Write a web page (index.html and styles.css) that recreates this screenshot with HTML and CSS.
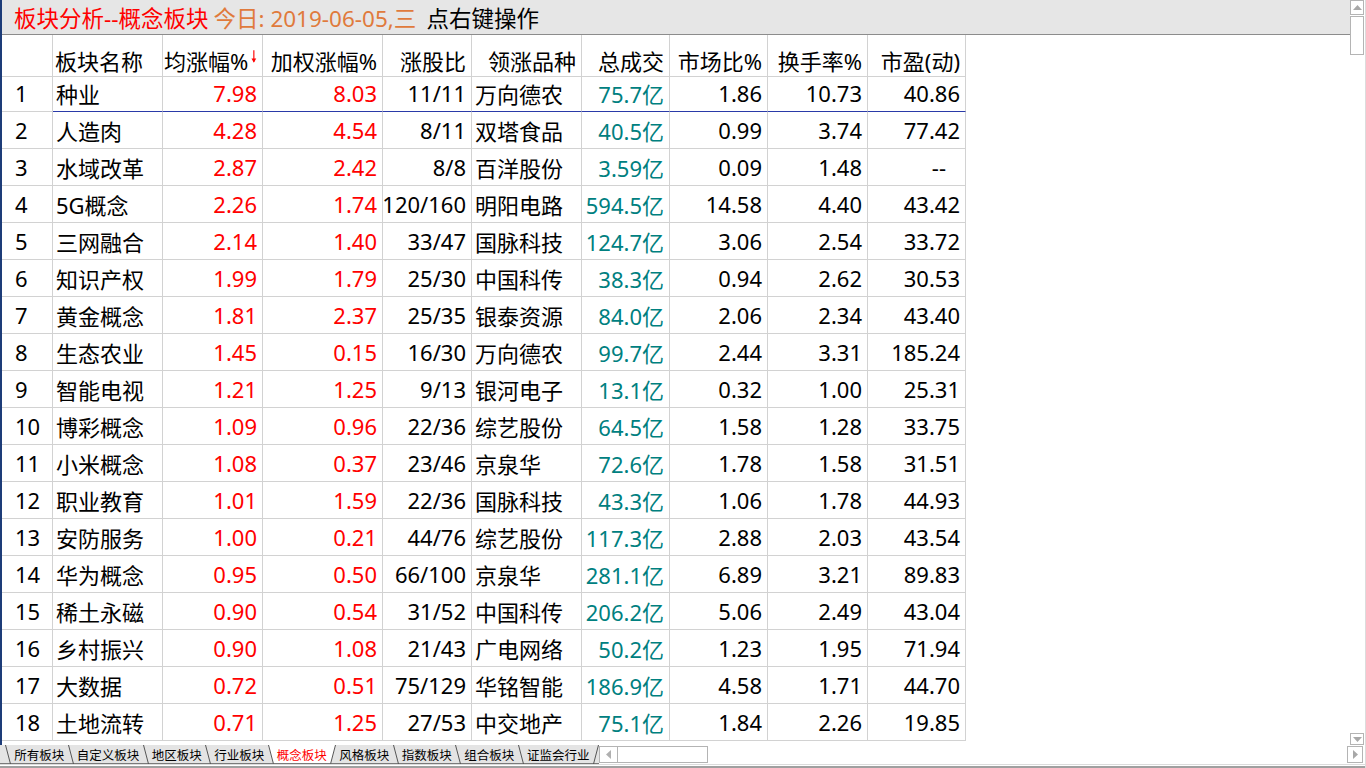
FILE: index.html
```html
<!DOCTYPE html>
<html lang="zh-CN">
<head>
<meta charset="utf-8">
<title>板块分析--概念板块</title>
<link rel="stylesheet" href="styles.css">
</head>
<body>
<div class="window">
  <div class="main">
    <div class="content">
      <div class="titlebar">
        <span class="t-red">板块分析--概念板块</span>
        <span class="t-orange">今日: 2019-06-05,三</span>
        <span class="t-black">点右键操作</span>
      </div>
      <div class="grid">
        <div class="row head">
          <div class="c idx"></div>
          <div class="c left">板块名称</div>
          <div class="c sort">均涨幅%<svg class="arrow" width="6" height="14" viewBox="0 0 6 14"><path d="M3 0V12" stroke="#f00" stroke-width="1.2" fill="none"/><path d="M0.5 8.5L3 13L5.5 8.5Z" fill="#f00"/></svg></div>
          <div class="c">加权涨幅%</div>
          <div class="c">涨股比</div>
          <div class="c">领涨品种</div>
          <div class="c">总成交</div>
          <div class="c">市场比%</div>
          <div class="c">换手率%</div>
          <div class="c">市盈(动)</div>
        </div>
        <div class="row sel"><div class="c idx">1</div><div class="c left">种业</div><div class="c red">7.98</div><div class="c red">8.03</div><div class="c">11/11</div><div class="c left">万向德农</div><div class="c teal">75.7亿</div><div class="c">1.86</div><div class="c">10.73</div><div class="c">40.86</div></div>
        <div class="row"><div class="c idx">2</div><div class="c left">人造肉</div><div class="c red">4.28</div><div class="c red">4.54</div><div class="c">8/11</div><div class="c left">双塔食品</div><div class="c teal">40.5亿</div><div class="c">0.99</div><div class="c">3.74</div><div class="c">77.42</div></div>
        <div class="row"><div class="c idx">3</div><div class="c left">水域改革</div><div class="c red">2.87</div><div class="c red">2.42</div><div class="c">8/8</div><div class="c left">百洋股份</div><div class="c teal">3.59亿</div><div class="c">0.09</div><div class="c">1.48</div><div class="c dash">--</div></div>
        <div class="row"><div class="c idx">4</div><div class="c left">5G概念</div><div class="c red">2.26</div><div class="c red">1.74</div><div class="c">120/160</div><div class="c left">明阳电路</div><div class="c teal">594.5亿</div><div class="c">14.58</div><div class="c">4.40</div><div class="c">43.42</div></div>
        <div class="row"><div class="c idx">5</div><div class="c left">三网融合</div><div class="c red">2.14</div><div class="c red">1.40</div><div class="c">33/47</div><div class="c left">国脉科技</div><div class="c teal">124.7亿</div><div class="c">3.06</div><div class="c">2.54</div><div class="c">33.72</div></div>
        <div class="row"><div class="c idx">6</div><div class="c left">知识产权</div><div class="c red">1.99</div><div class="c red">1.79</div><div class="c">25/30</div><div class="c left">中国科传</div><div class="c teal">38.3亿</div><div class="c">0.94</div><div class="c">2.62</div><div class="c">30.53</div></div>
        <div class="row"><div class="c idx">7</div><div class="c left">黄金概念</div><div class="c red">1.81</div><div class="c red">2.37</div><div class="c">25/35</div><div class="c left">银泰资源</div><div class="c teal">84.0亿</div><div class="c">2.06</div><div class="c">2.34</div><div class="c">43.40</div></div>
        <div class="row"><div class="c idx">8</div><div class="c left">生态农业</div><div class="c red">1.45</div><div class="c red">0.15</div><div class="c">16/30</div><div class="c left">万向德农</div><div class="c teal">99.7亿</div><div class="c">2.44</div><div class="c">3.31</div><div class="c">185.24</div></div>
        <div class="row"><div class="c idx">9</div><div class="c left">智能电视</div><div class="c red">1.21</div><div class="c red">1.25</div><div class="c">9/13</div><div class="c left">银河电子</div><div class="c teal">13.1亿</div><div class="c">0.32</div><div class="c">1.00</div><div class="c">25.31</div></div>
        <div class="row"><div class="c idx">10</div><div class="c left">博彩概念</div><div class="c red">1.09</div><div class="c red">0.96</div><div class="c">22/36</div><div class="c left">综艺股份</div><div class="c teal">64.5亿</div><div class="c">1.58</div><div class="c">1.28</div><div class="c">33.75</div></div>
        <div class="row"><div class="c idx">11</div><div class="c left">小米概念</div><div class="c red">1.08</div><div class="c red">0.37</div><div class="c">23/46</div><div class="c left">京泉华</div><div class="c teal">72.6亿</div><div class="c">1.78</div><div class="c">1.58</div><div class="c">31.51</div></div>
        <div class="row"><div class="c idx">12</div><div class="c left">职业教育</div><div class="c red">1.01</div><div class="c red">1.59</div><div class="c">22/36</div><div class="c left">国脉科技</div><div class="c teal">43.3亿</div><div class="c">1.06</div><div class="c">1.78</div><div class="c">44.93</div></div>
        <div class="row"><div class="c idx">13</div><div class="c left">安防服务</div><div class="c red">1.00</div><div class="c red">0.21</div><div class="c">44/76</div><div class="c left">综艺股份</div><div class="c teal">117.3亿</div><div class="c">2.88</div><div class="c">2.03</div><div class="c">43.54</div></div>
        <div class="row"><div class="c idx">14</div><div class="c left">华为概念</div><div class="c red">0.95</div><div class="c red">0.50</div><div class="c">66/100</div><div class="c left">京泉华</div><div class="c teal">281.1亿</div><div class="c">6.89</div><div class="c">3.21</div><div class="c">89.83</div></div>
        <div class="row"><div class="c idx">15</div><div class="c left">稀土永磁</div><div class="c red">0.90</div><div class="c red">0.54</div><div class="c">31/52</div><div class="c left">中国科传</div><div class="c teal">206.2亿</div><div class="c">5.06</div><div class="c">2.49</div><div class="c">43.04</div></div>
        <div class="row"><div class="c idx">16</div><div class="c left">乡村振兴</div><div class="c red">0.90</div><div class="c red">1.08</div><div class="c">21/43</div><div class="c left">广电网络</div><div class="c teal">50.2亿</div><div class="c">1.23</div><div class="c">1.95</div><div class="c">71.94</div></div>
        <div class="row"><div class="c idx">17</div><div class="c left">大数据</div><div class="c red">0.72</div><div class="c red">0.51</div><div class="c">75/129</div><div class="c left">华铭智能</div><div class="c teal">186.9亿</div><div class="c">4.58</div><div class="c">1.71</div><div class="c">44.70</div></div>
        <div class="row"><div class="c idx">18</div><div class="c left">土地流转</div><div class="c red">0.71</div><div class="c red">1.25</div><div class="c">27/53</div><div class="c left">中交地产</div><div class="c teal">75.1亿</div><div class="c">1.84</div><div class="c">2.26</div><div class="c">19.85</div></div>
      </div>
    </div>
    <div class="vscroll">
      <div class="sbtn up"><svg width="9" height="5" viewBox="0 0 9 5"><path d="M0 5L4.5 0L9 5Z" fill="#a8a8a8"/></svg></div>
      <div class="thumb"></div>
      <div class="track"></div>
      <div class="sbtn down"><svg width="9" height="5" viewBox="0 0 9 5"><path d="M0 0L4.5 5L9 0Z" fill="#a8a8a8"/></svg></div>
    </div>
  </div>
  <div class="bottombar">
    <div class="tabs">
      <span class="sep"><svg width="6" height="19" viewBox="0 0 6 19"><path d="M0.5 0L5.5 19" stroke="#555" fill="none"/></svg></span>
      <span class="tab">所有板块</span>
      <span class="sep"><svg width="6" height="19" viewBox="0 0 6 19"><path d="M0.5 0L5.5 19" stroke="#555" fill="none"/></svg></span>
      <span class="tab">自定义板块</span>
      <span class="sep"><svg width="6" height="19" viewBox="0 0 6 19"><path d="M0.5 0L5.5 19" stroke="#555" fill="none"/></svg></span>
      <span class="tab">地区板块</span>
      <span class="sep"><svg width="6" height="19" viewBox="0 0 6 19"><path d="M0.5 0L5.5 19" stroke="#555" fill="none"/></svg></span>
      <span class="tab">行业板块</span>
      <span class="sep"><svg width="6" height="19" viewBox="0 0 6 19"><path d="M0 0H6V19H5.5Z" fill="#fff"/><path d="M0.5 0L5.5 19" stroke="#555" fill="none"/></svg></span>
      <span class="tab active">概念板块</span>
      <span class="sep"><svg width="6" height="19" viewBox="0 0 6 19"><path d="M0 0H6L0.5 19H0Z" fill="#fff"/><path d="M5.5 0L0.5 19" stroke="#555" fill="none"/></svg></span>
      <span class="tab">风格板块</span>
      <span class="sep"><svg width="6" height="19" viewBox="0 0 6 19"><path d="M0.5 0L5.5 19" stroke="#555" fill="none"/></svg></span>
      <span class="tab">指数板块</span>
      <span class="sep"><svg width="6" height="19" viewBox="0 0 6 19"><path d="M0.5 0L5.5 19" stroke="#555" fill="none"/></svg></span>
      <span class="tab">组合板块</span>
      <span class="sep"><svg width="6" height="19" viewBox="0 0 6 19"><path d="M0.5 0L5.5 19" stroke="#555" fill="none"/></svg></span>
      <span class="tab">证监会行业</span>
      <span class="sep"><svg width="6" height="19" viewBox="0 0 6 19"><path d="M5.5 0L0.5 19" stroke="#555" fill="none"/></svg></span>
    </div>
    <div class="hscroll">
      <div class="hbtn"><svg width="5" height="9" viewBox="0 0 5 9"><path d="M5 0L0 4.5L5 9Z" fill="#b0b0b0"/></svg></div>
      <div class="hthumb"></div>
    </div>
    <div class="hspace"></div>
    <div class="hbtn right"><svg width="5" height="9" viewBox="0 0 5 9"><path d="M0 0L5 4.5L0 9Z" fill="#a8a8a8"/></svg></div>
  </div>
  <div class="edge"></div>
</div>
</body>
</html>
```
FILE: styles.css
```css
* { box-sizing: border-box; }
html, body { margin: 0; padding: 0; background: #fff; }
body {
  width: 1366px;
  height: 768px;
  overflow: hidden;
  font-family: "Noto Sans", "Noto Sans CJK SC", sans-serif;
}
.window {
  width: 1366px;
  height: 768px;
  display: flex;
  flex-direction: column;
  border-right: 1px solid #dcdcdc;
}
.main {
  height: 745px;
  display: flex;
}
.content {
  width: 1350px;
  border-left: 2px solid #1d3c78;
  display: flex;
  flex-direction: column;
}
.titlebar {
  height: 35px;
  width: 1348px;
  background: #e6e6e6;
  border-bottom: 1px solid #8c8c8c;
  display: flex;
  align-items: center;
  padding-left: 12px;
  font-size: 22.5px;
  white-space: nowrap;
}
.t-red { color: #ff0000; }
.t-orange { color: #e07a3c; margin-left: 5px; }
.t-black { color: #000; margin-left: 10px; }

.grid { display: flex; flex-direction: column; }
.row {
  display: grid;
  grid-template-columns: 51px 110px 100px 120px 89px 110px 88px 98px 100px 98px;
  height: 37px;
  font-size: 22px;
  color: #000;
}
.row.head { height: 40px; }
.c {
  border-right: 1px solid #d2d2d2;
  border-bottom: 1px solid #d2d2d2;
  display: flex;
  align-items: center;
  justify-content: flex-end;
  padding-right: 5px;
  white-space: nowrap;
}
.head .c { padding-top: 9px; }
.c.idx { justify-content: flex-start; padding-left: 13px; padding-right: 0; }
.c.left { justify-content: flex-start; padding-left: 3px; padding-right: 0; }
.head .c.left { padding-left: 2px; }
.c.sort { padding-right: 5px; padding-left: 1px; justify-content: flex-start; }
.arrow { margin-left: 3px; margin-bottom: 6px; }
.c.dash { padding-right: 19px; }
.red { color: #ff0000; }
.teal { color: #00807f; }
.row.sel .c:not(.idx) { border-bottom-color: #2a3aa8; }

.vscroll {
  width: 14px;
  display: flex;
  flex-direction: column;
  gap: 1px;
}
.sbtn {
  height: 15px;
  border: 1px solid #b4b4b4;
  display: flex;
  align-items: center;
  justify-content: center;
}
.down { height: 12px; }
.thumb { height: 39px; border: 1px solid #b4b4b4; }
.track { flex: 1; }

.bottombar {
  height: 19px;
  display: flex;
  align-items: stretch;
}
.tabs {
  display: flex;
  align-items: stretch;
  padding-left: 5px;
  background: #e4e4e4;
  border-bottom: 1px solid #7a7a7a;
}
.sep { display: flex; width: 6px; }
.tab {
  display: flex;
  align-items: center;
  padding: 0 3.25px;
  color: #000;
  font-family: "Noto Sans CJK SC", sans-serif;
  font-size: 12.5px;
}
.tab.active { background: #fff; color: #ff0000; }
.hscroll {
  width: 109px;
  margin-top: 1px;
  margin-bottom: 1px;
  border: 1px solid #b4b4b4;
  display: flex;
}
.hbtn {
  width: 18px;
  display: flex;
  align-items: center;
  justify-content: center;
  border-right: 1px solid #b4b4b4;
}
.hthumb { flex: 1; }
.hspace { flex: 1; }
.hbtn.right {
  width: 16px;
  margin-top: 1px;
  margin-bottom: 1px;
  margin-right: 2px;
  border: 1px solid #b4b4b4;
}
.edge {
  height: 4px;
  border-top: 1px solid #dcdcdc;
  border-bottom: 2px solid #a0a0a0;
}
```
